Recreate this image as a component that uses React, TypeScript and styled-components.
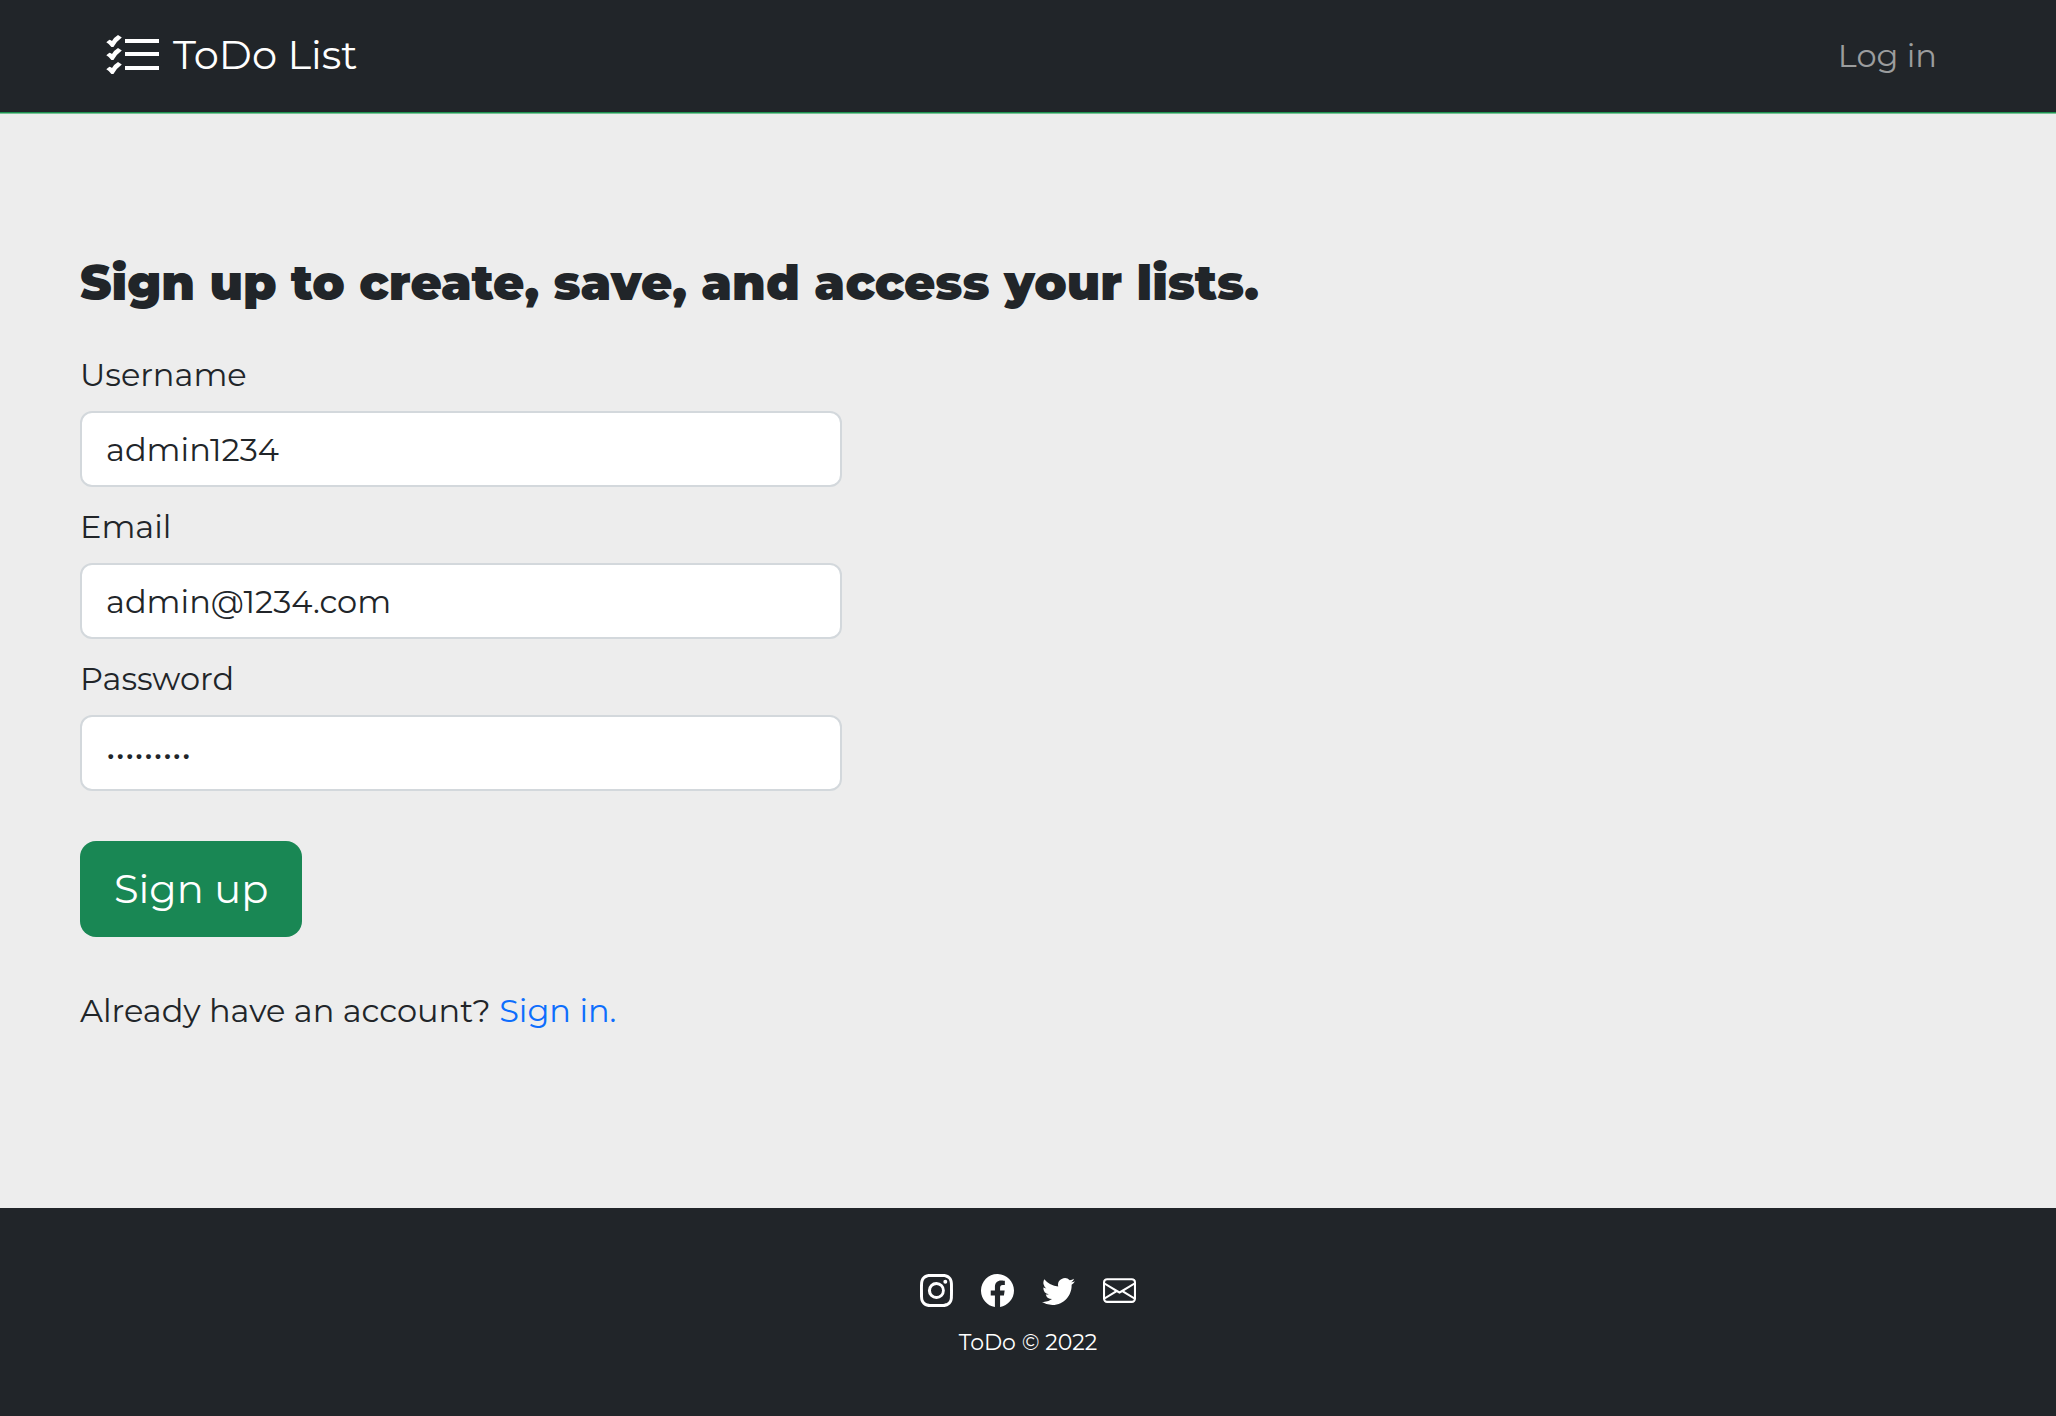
import React from "react";
import styled, { createGlobalStyle } from "styled-components";
import { BsInstagram, BsFacebook, BsTwitter, BsEnvelope } from "react-icons/bs";

const GlobalStyle = createGlobalStyle`
  *, *::before, *::after { box-sizing: border-box; }
  body {
    margin: 0;
    background: #ededed;
    color: #212529;
    font-family: Montserrat, Inter, "Open Sans", sans-serif;
    font-size: 32px;
    font-weight: 400;
    line-height: 48px;
  }
`;

const Page = styled.div`
  display: flex;
  flex-direction: column;
  min-height: 100vh;
`;

const Header = styled.header`
  display: flex;
  align-items: center;
  justify-content: space-between;
  padding: 26px 119px 26px 106px;
  background: #212529;
  border-bottom: 1px solid #1e9150;
  box-shadow: 0 1px 0 #78c297;
`;

const Brand = styled.a`
  display: flex;
  align-items: center;
  gap: 13px;
  padding-bottom: 2px;
  color: #fff;
  font-size: 40px;
  line-height: 58px;
  text-decoration: none;
`;

const NavLink = styled.a`
  color: #9b9d9e;
  text-decoration: none;
`;

const Main = styled.main`
  flex: 1;
  padding: 138px 80px 0;
`;

const Title = styled.h1`
  margin: 0 0 36px;
  font-size: 48px;
  font-weight: 900;
  line-height: 64px;
`;

const Form = styled.form`
  display: flex;
  flex-direction: column;
  align-items: flex-start;
`;

const Field = styled.div`
  display: flex;
  flex-direction: column;
  gap: 12px;
  width: 40.2%;
  margin-bottom: 16px;
`;

const Label = styled.label`
  align-self: flex-start;
`;

const Input = styled.input`
  width: 100%;
  height: 76px;
  padding: 12px 24px;
  border: 2px solid #d3d8dc;
  border-radius: 12px;
  background: #fff;
  color: #212529;
  font: inherit;
`;

const SubmitButton = styled.button`
  margin: 34px 0 50px;
  padding: 18px 34px;
  border: 0;
  border-radius: 16px;
  background: #198754;
  color: #fff;
  font: inherit;
  font-size: 40px;
  line-height: 60px;
`;

const Prompt = styled.p`
  margin: 0;
`;

const TextLink = styled.a`
  color: #0d6efd;
  text-decoration: none;
`;

const Footer = styled.footer`
  display: flex;
  flex-direction: column;
  align-items: center;
  gap: 19px;
  padding: 66px 24px 56px;
  background: #212529;
  color: #fff;
`;

const SocialLinks = styled.nav`
  display: flex;
  gap: 28px;
`;

const SocialLink = styled.a`
  display: flex;
  color: inherit;
`;

const Copyright = styled.p`
  margin: 0;
  font-size: 22px;
  line-height: 34px;
`;

const rows = [0, 13, 27];

function ChecklistIcon() {
  return (
    <svg width="54" height="40" viewBox="0 0 54 40" fill="#fff" aria-hidden="true">
      {rows.map((y) => (
        <g key={y} transform={`translate(0 ${y})`}>
          <path d="M0.3 7.2 L3.4 4.800 Q5 5 6 6 Q8.500 2 12 0 L15.800 2.600 Q10.500 6.500 7.400 12 L5.400 12 Q3.500 9 0.300 7.200 Z" />
          <rect x="19" y="4" width="34" height="4" />
        </g>
      ))}
    </svg>
  );
}

const fields = [
  { id: "username", label: "Username", type: "text", value: "admin1234" },
  { id: "email", label: "Email", type: "email", value: "admin@1234.com" },
  { id: "password", label: "Password", type: "password", value: "admin1234" },
];

const socials = [
  { name: "Instagram", Icon: BsInstagram },
  { name: "Facebook", Icon: BsFacebook },
  { name: "Twitter", Icon: BsTwitter },
  { name: "Email", Icon: BsEnvelope },
];

export default function App() {
  return (
    <Page>
      <GlobalStyle />
      <Header>
        <Brand href="#">
          <ChecklistIcon />
          ToDo List
        </Brand>
        <NavLink href="#login">Log in</NavLink>
      </Header>
      <Main>
        <Title>Sign up to create, save, and access your lists.</Title>
        <Form onSubmit={(event) => event.preventDefault()}>
          {fields.map(({ id, label, type, value }) => (
            <Field key={id}>
              <Label htmlFor={id}>{label}</Label>
              <Input id={id} type={type} defaultValue={value} />
            </Field>
          ))}
          <SubmitButton type="submit">Sign up</SubmitButton>
        </Form>
        <Prompt>
          Already have an account? <TextLink href="#login">Sign in.</TextLink>
        </Prompt>
      </Main>
      <Footer>
        <SocialLinks>
          {socials.map(({ name, Icon }) => (
            <SocialLink key={name} href="#" aria-label={name}>
              <Icon size={33} />
            </SocialLink>
          ))}
        </SocialLinks>
        <Copyright>ToDo © 2022</Copyright>
      </Footer>
    </Page>
  );
}
